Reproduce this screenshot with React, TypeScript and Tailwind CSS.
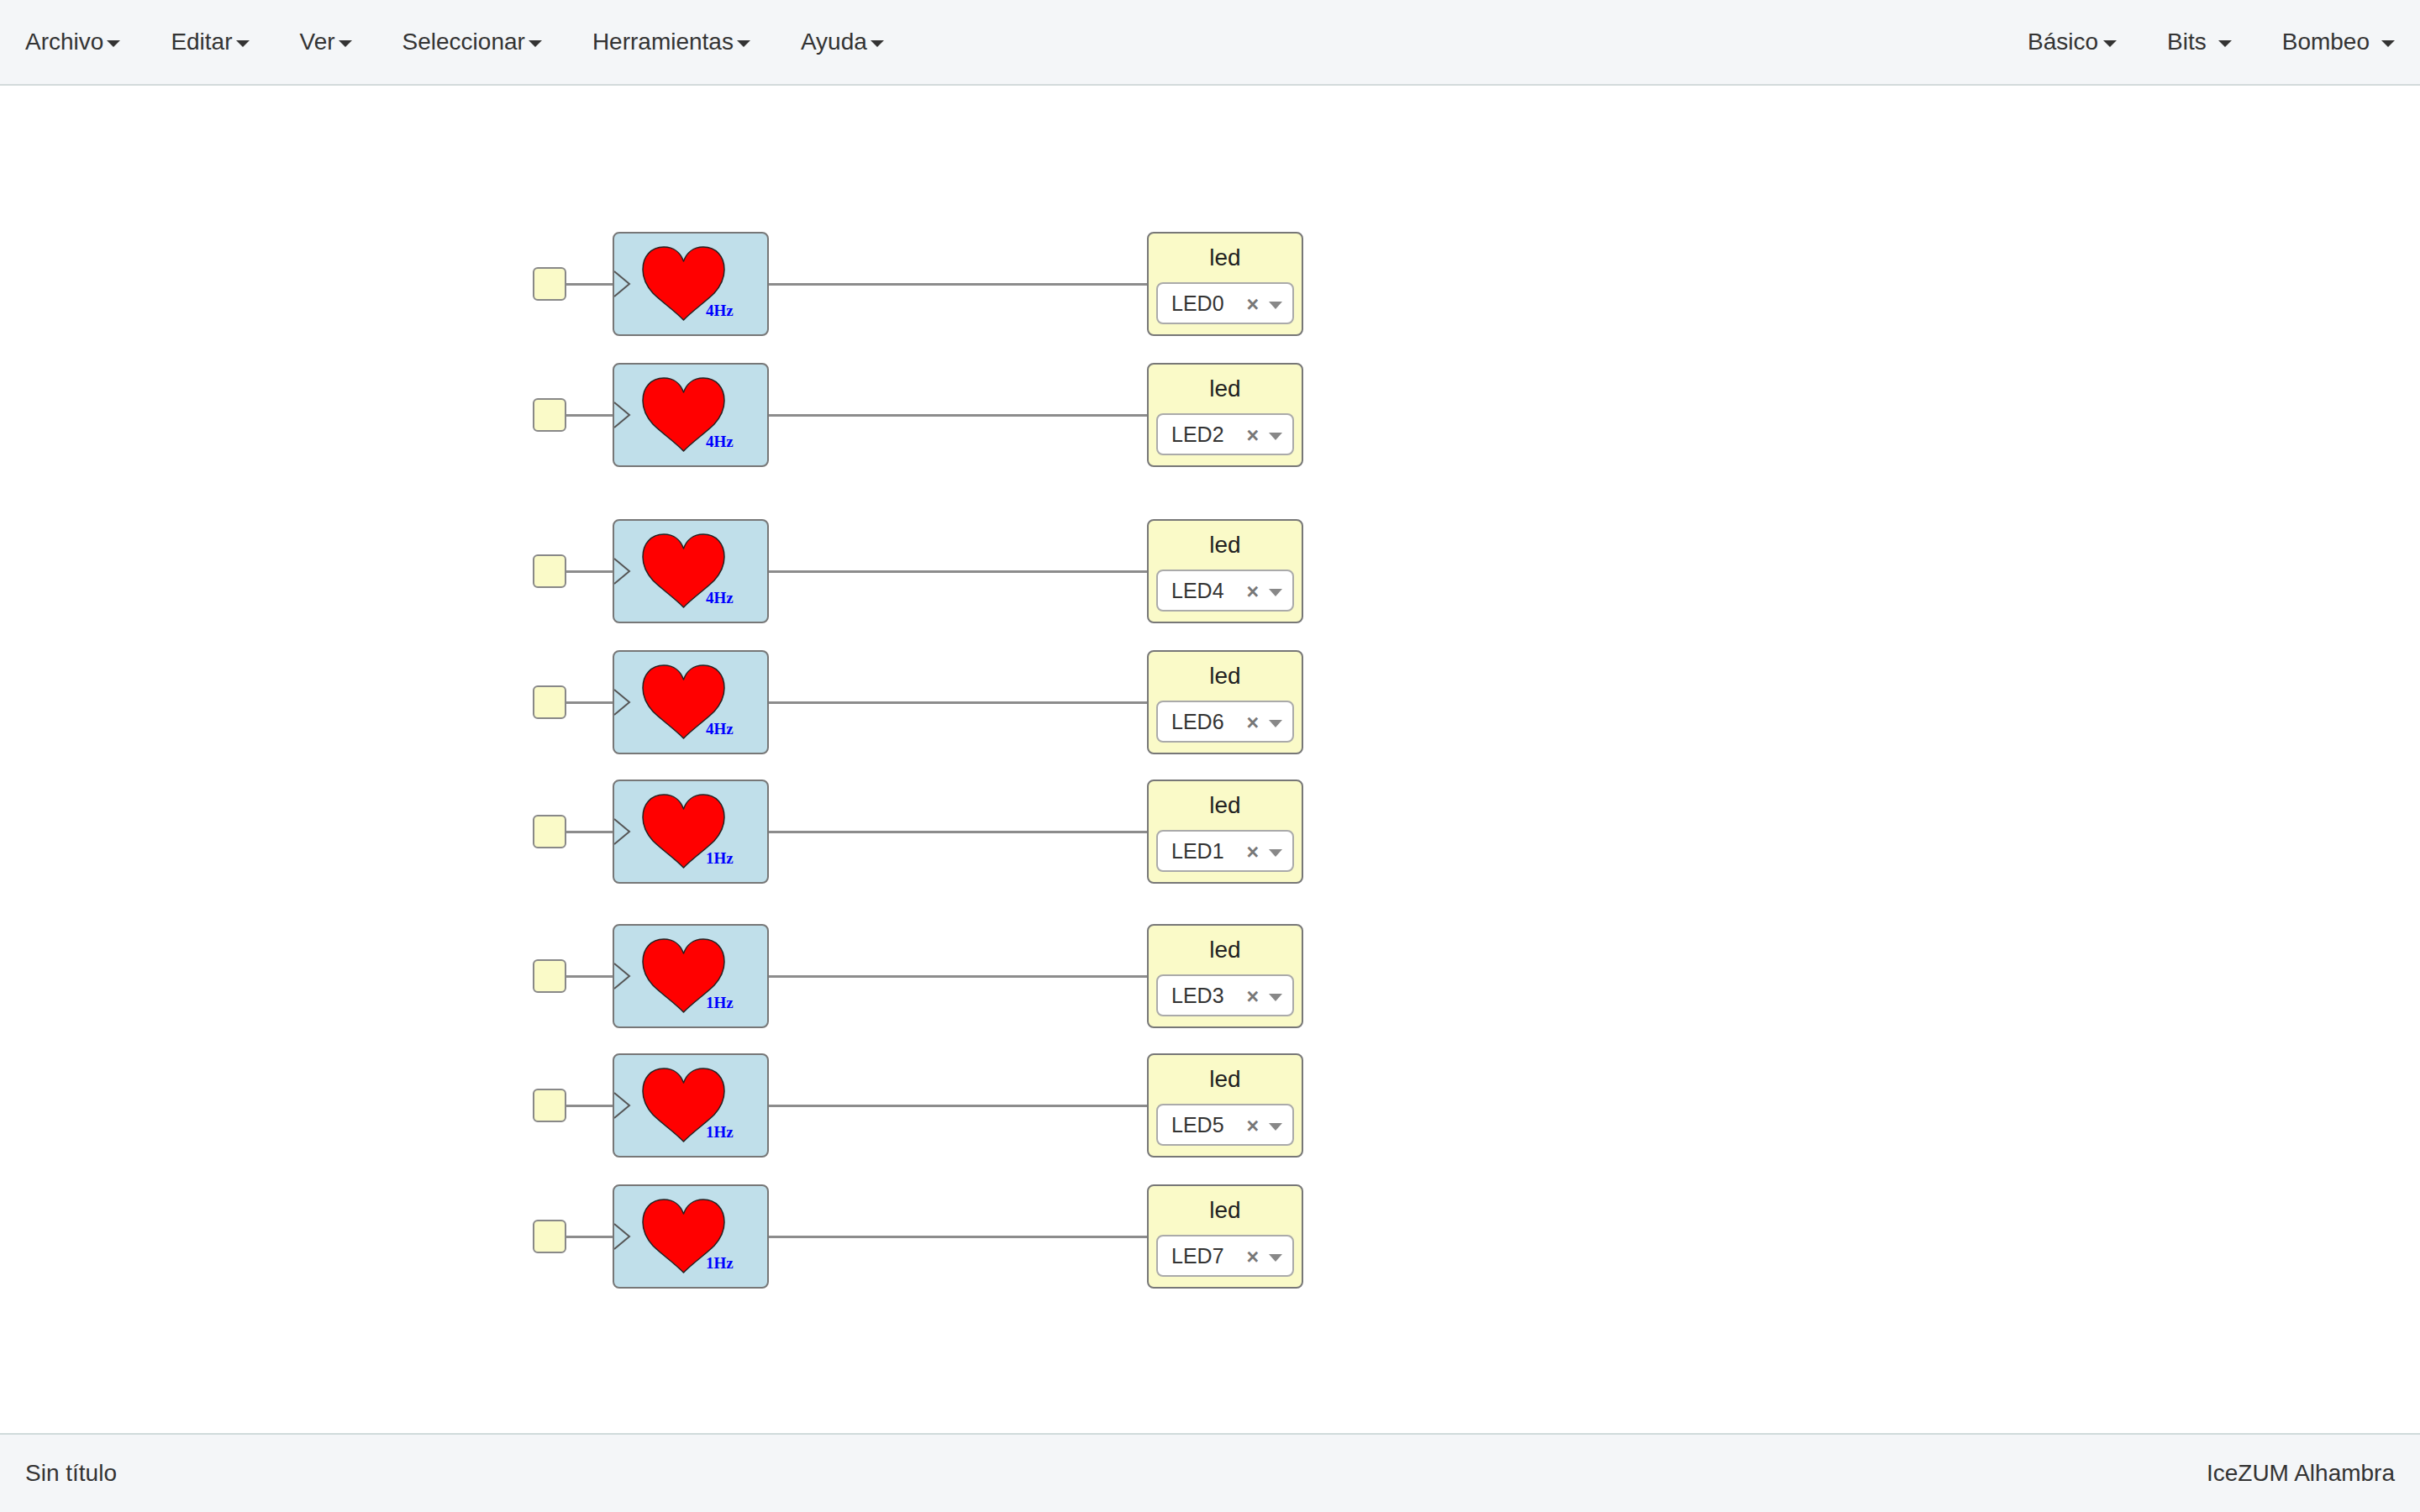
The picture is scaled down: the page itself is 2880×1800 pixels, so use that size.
import React from "react";

type MenuItem = { label: string; gap: string };

const LEFT_MENU: MenuItem[] = [
  { label: "Archivo", gap: "gap-1" },
  { label: "Editar", gap: "gap-1" },
  { label: "Ver", gap: "gap-1" },
  { label: "Seleccionar", gap: "gap-1" },
  { label: "Herramientas", gap: "gap-1" },
  { label: "Ayuda", gap: "gap-1" },
];

const RIGHT_MENU: MenuItem[] = [
  { label: "Básico", gap: "gap-1.5" },
  { label: "Bits", gap: "gap-3.5" },
  { label: "Bombeo", gap: "gap-3.5" },
];

type Row = { y: number; led: string; freq: string };

// y is the top edge of the row's blocks on the canvas.
const ROWS: Row[] = [
  { y: 174, led: "LED0", freq: "4Hz" },
  { y: 330, led: "LED2", freq: "4Hz" },
  { y: 516, led: "LED4", freq: "4Hz" },
  { y: 672, led: "LED6", freq: "4Hz" },
  { y: 826, led: "LED1", freq: "1Hz" },
  { y: 998, led: "LED3", freq: "1Hz" },
  { y: 1152, led: "LED5", freq: "1Hz" },
  { y: 1308, led: "LED7", freq: "1Hz" },
];

const PINS = ["LED0", "LED1", "LED2", "LED3", "LED4", "LED5", "LED6", "LED7"];

function Menu({ items, label }: { items: MenuItem[]; label: string }) {
  return (
    <nav aria-label={label} className="flex">
      {items.map((item) => (
        <button key={item.label} type="button" className={`flex items-center px-[30px] ${item.gap}`}>
          {item.label}
          <svg className="mt-1 h-2 w-4" viewBox="0 0 16 8" aria-hidden="true">
            <path d="M0 0h16L8 8z" fill="#333" />
          </svg>
        </button>
      ))}
    </nav>
  );
}

function HeartBlock({ freq }: { freq: string }) {
  return (
    <div className="absolute left-[729px] top-0 h-[124px] w-[186px] rounded-lg border-2 border-[#777] bg-[#c0dfea]">
      <svg className="block h-full w-full" viewBox="0 0 182 120" role="img" aria-label={`Corazón ${freq}`}>
        <path d="M0 45L18 60L0 75" fill="none" stroke="#555" strokeWidth="2" />
        <path
          d="M82.500 33C79 23 71 16 59 16C44 16 34 27 34 43C34 54 38 62 46 71C56 81 72 92 82.500 103C93 92 109 81 119 71C127 62 131 54 131 43C131 27 121 16 106 16C94 16 86 23 82.500 33Z"
          fill="#f00"
          stroke="#222"
          strokeWidth="1.5"
          strokeLinejoin="round"
        />
        <text x="109" y="98" fontSize="19" fontWeight="700" fill="#00f" fontFamily="'Liberation Serif', serif">
          {freq}
        </text>
      </svg>
    </div>
  );
}

function LedBlock({ led }: { led: string }) {
  const id = `pin-${led}`;
  return (
    <div className="absolute left-[1365px] top-0 flex h-[124px] w-[186px] flex-col items-center rounded-lg border-2 border-[#777] bg-[#fafac8] pt-[11px]">
      <label htmlFor={id} className="text-[28px] leading-9 text-[#222]">
        led
      </label>
      <div className="relative mt-[11px]">
        <select
          id={id}
          defaultValue={led}
          className="block h-[50px] w-[164px] appearance-none rounded-lg border-2 border-[#aaa] bg-white pl-4 text-[25px] text-[#333]"
        >
          {PINS.map((pin) => (
            <option key={pin}>{pin}</option>
          ))}
        </select>
        <button
          type="button"
          aria-label={`Quitar ${led}`}
          className="absolute right-[42px] top-[11px] text-[25px] font-bold leading-[30px] text-[#777]"
        >
          ×
        </button>
        <svg className="pointer-events-none absolute right-[14px] top-[23px] h-[9px] w-4" viewBox="0 0 16 9" aria-hidden="true">
          <path d="M0 0h16L8 9z" fill="#888" />
        </svg>
      </div>
    </div>
  );
}

function CanvasRow({ row }: { row: Row }) {
  return (
    <div className="absolute left-0 h-[124px] w-full" style={{ top: row.y }}>
      <div className="absolute left-[674px] top-[61px] h-[3px] w-[691px] bg-[#8c8c8c]" />
      <div className="absolute left-[634px] top-[42px] h-10 w-10 rounded-md border-2 border-[#888] bg-[#fafac8]" />
      <HeartBlock freq={row.freq} />
      <LedBlock led={row.led} />
    </div>
  );
}

export default function App() {
  return (
    <div className="flex min-h-screen flex-col bg-white font-['Liberation_Sans',Arial,sans-serif] text-[28px] leading-10 text-[#333]">
      <header className="flex justify-between border-b-2 border-[#d3dadb] bg-[#f4f6f8] py-[30px]">
        <Menu items={LEFT_MENU} label="Principal" />
        <Menu items={RIGHT_MENU} label="Bloques" />
      </header>
      <main className="relative min-h-[1500px] flex-1 overflow-hidden">
        {ROWS.map((row) => (
          <CanvasRow key={row.led} row={row} />
        ))}
      </main>
      <footer className="flex justify-between border-t-2 border-[#d0dbdb] bg-[#f4f6f8] px-[30px] py-[26px]">
        <span>Sin título</span>
        <span>IceZUM Alhambra</span>
      </footer>
    </div>
  );
}
